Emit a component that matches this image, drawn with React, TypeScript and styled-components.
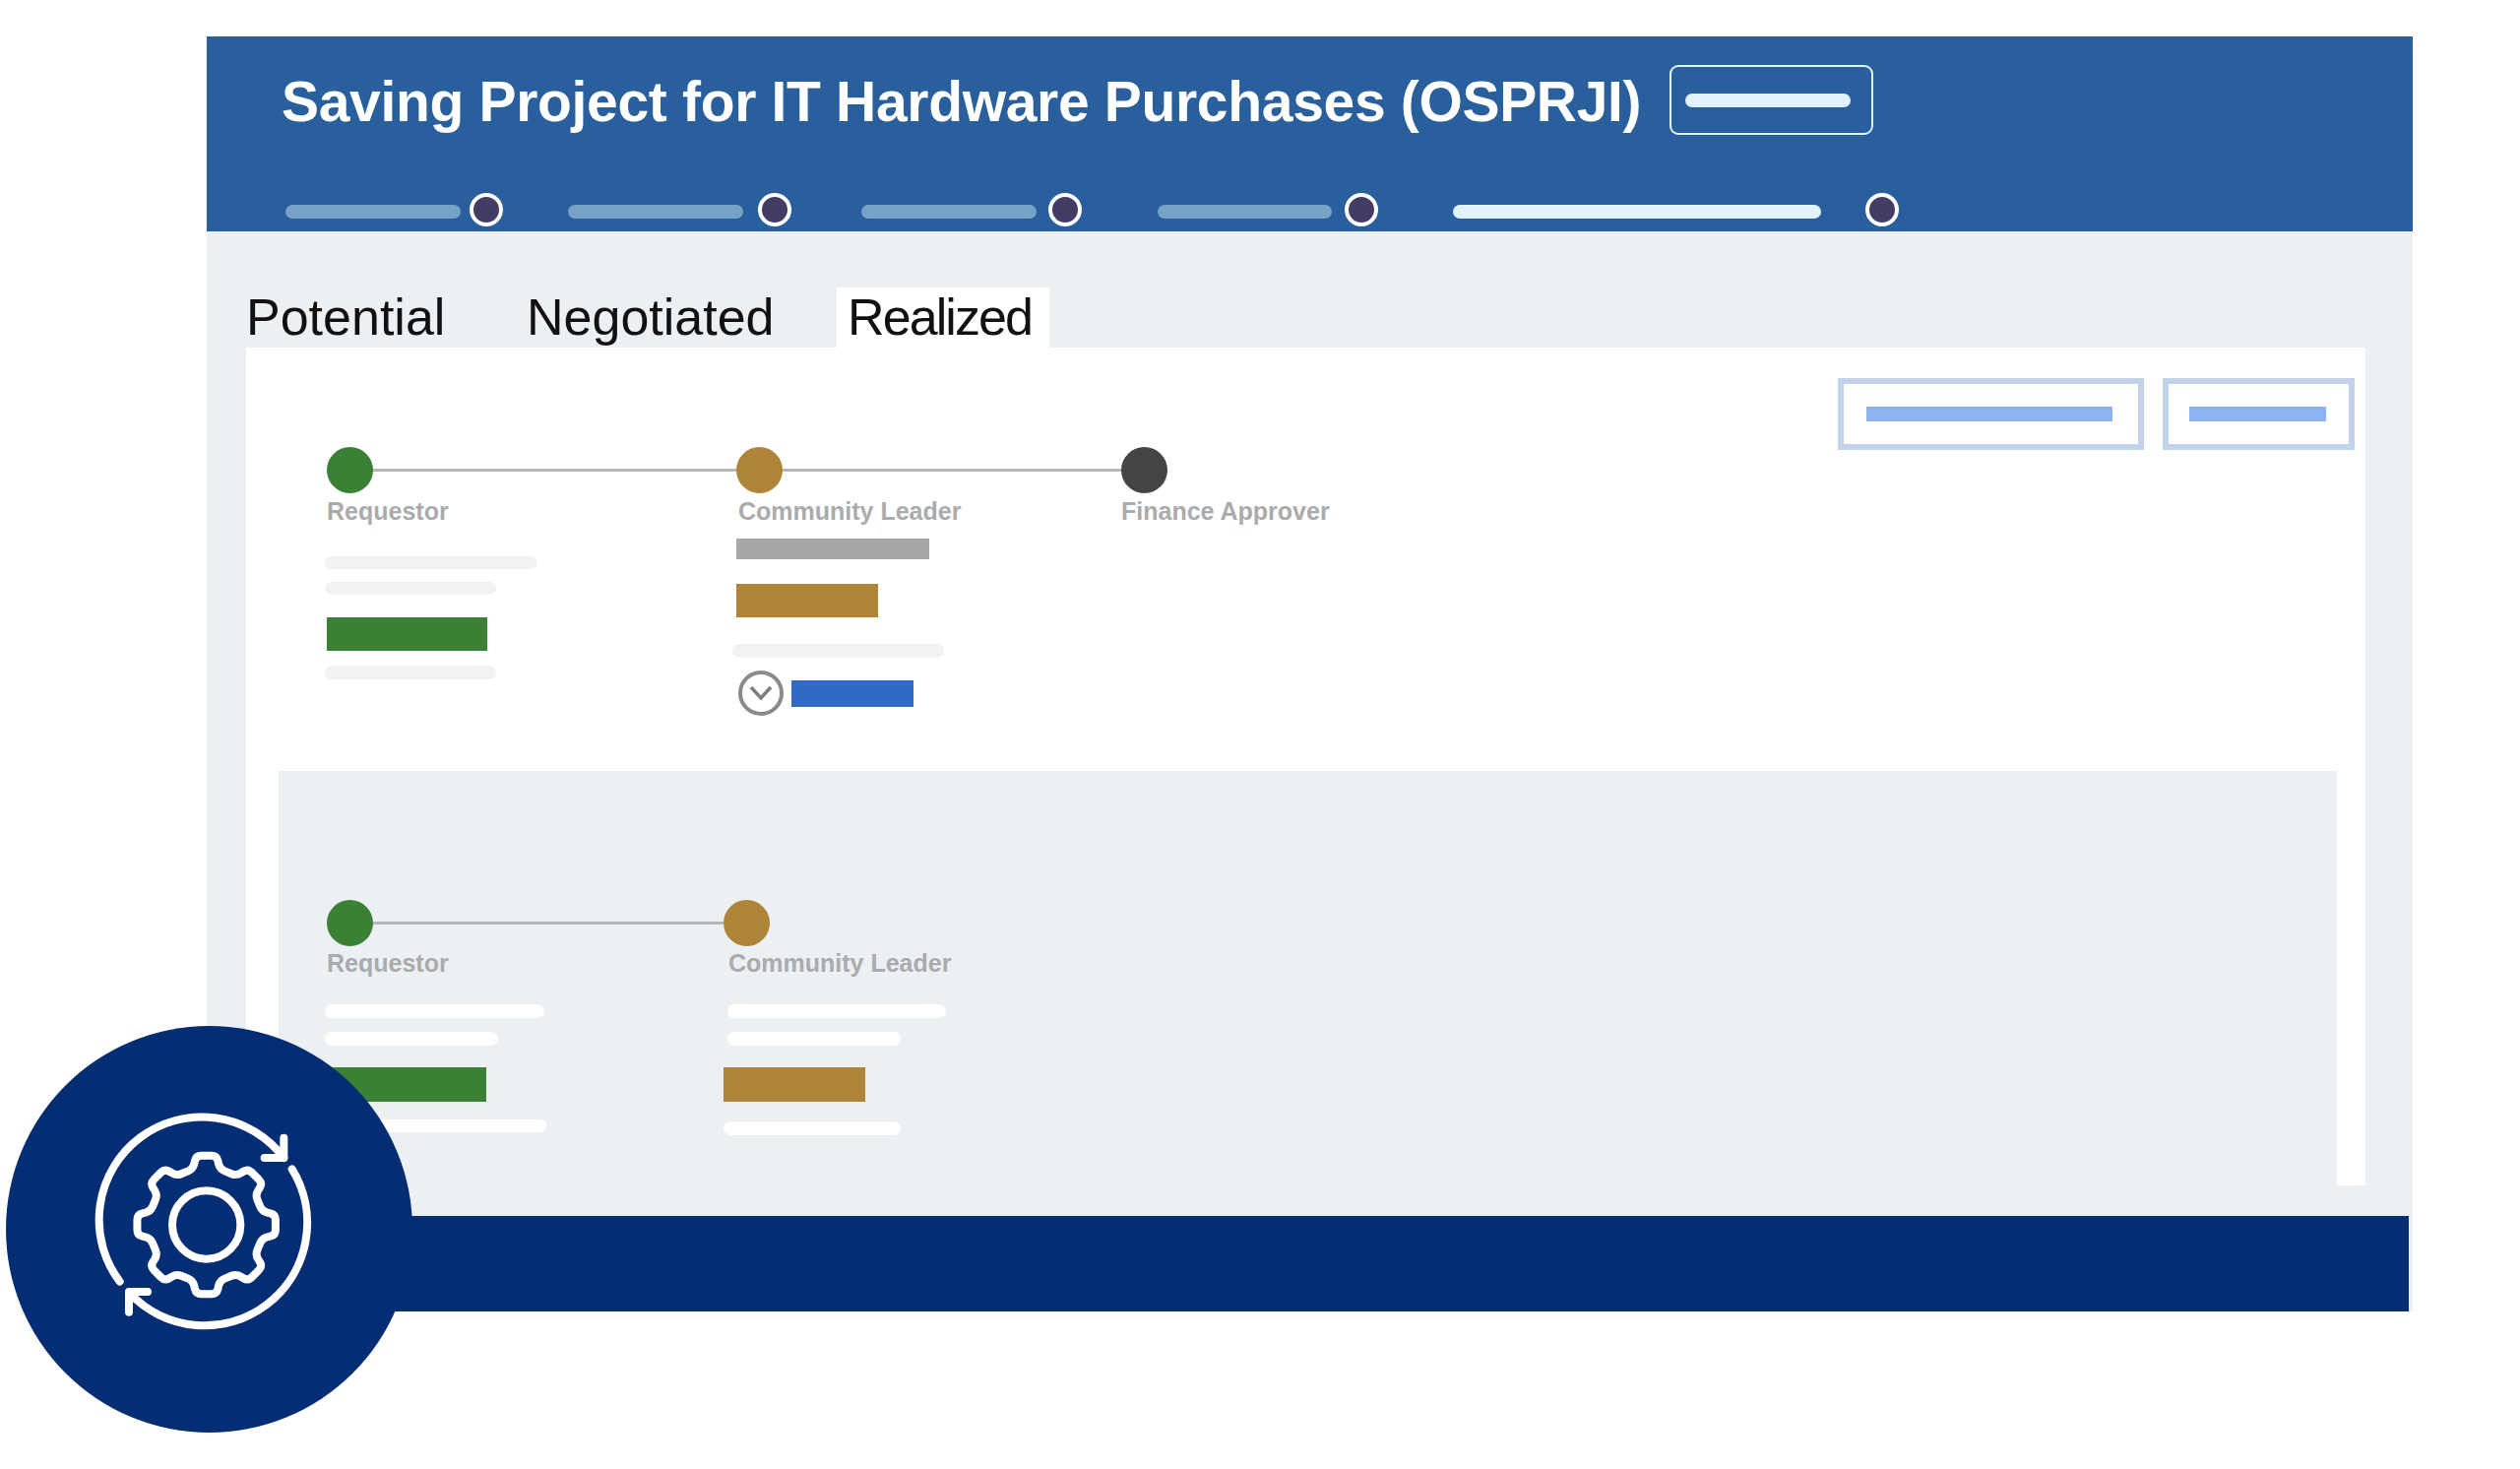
import React from "react";
import styled, { createGlobalStyle } from "styled-components";

const GlobalStyle = createGlobalStyle`
  html, body { margin: 0; padding: 0; background: #fff; }
  * { box-sizing: border-box; }
  body { font-family: "Liberation Sans", Arial, sans-serif; }
`;

const Page = styled.div`
  position: relative;
  width: 2560px;
  height: 1492px;
  padding: 37px 0 0 210px;
  background: #fff;
  overflow: hidden;
`;

const Frame = styled.div`
  width: 2241px;
  background: #ecf0f3;
`;

const Header = styled.header`
  height: 198px;
  padding: 29px 0 0 76px;
  background: #2a5f9e;
`;

const TitleRow = styled.div`
  display: flex;
  align-items: center;
  height: 71px;
`;

const Title = styled.h1`
  margin: 2px 0 0;
  font-size: 57px;
  line-height: 66px;
  font-weight: 700;
  color: #fff;
  white-space: nowrap;
  letter-spacing: -0.32px;
`;

const StatusBox = styled.div`
  display: flex;
  align-items: center;
  justify-content: center;
  width: 207px;
  height: 71px;
  margin-left: 29px;
  padding-right: 7px;
  border: 2px solid #e4f2fb;
  border-radius: 9px;
`;

const StatusBar = styled.div`
  width: 168px;
  height: 14px;
  border-radius: 7px;
  background: #e1f3ff;
`;

const Stepper = styled.div`
  display: flex;
  align-items: center;
  margin: 59px 0 0 4px;
`;

const Step = styled.div<{ $after: number }>`
  display: flex;
  align-items: center;
  margin-right: ${(p) => p.$after}px;
`;

const StepBar = styled.div<{ $w: number; $active?: boolean }>`
  width: ${(p) => p.$w}px;
  height: 14px;
  margin-top: 3px;
  border-radius: 7px;
  background: ${(p) => (p.$active ? "#e1f3ff" : "#76a2c6")};
`;

const StepDot = styled.div<{ $gap: number }>`
  width: 34px;
  height: 34px;
  margin-left: ${(p) => p.$gap}px;
  border: 4px solid #fff;
  border-radius: 50%;
  background: #453c66;
`;

const Body = styled.div`
  padding: 0 48px 31px 40px;
`;

const Tabs = styled.div`
  display: flex;
  align-items: flex-end;
  height: 118px;
`;

const Tab = styled.div<{ $left: number; $w: number; $pad: number; $active?: boolean; $track?: number }>`
  width: ${(p) => p.$w}px;
  height: 61px;
  margin-left: ${(p) => p.$left}px;
  padding-left: ${(p) => p.$pad}px;
  font-size: 52px;
  line-height: 61px;
  color: #111;
  letter-spacing: ${(p) => p.$track ?? 0}px;
  white-space: nowrap;
  background: ${(p) => (p.$active ? "#fff" : "transparent")};
`;

const Card = styled.section`
  display: flex;
  flex-direction: column;
  width: 2153px;
  height: 851px;
  background: #fff;
`;

const TopArea = styled.div`
  display: flex;
  justify-content: space-between;
  height: 430px;
  padding: 31px 11px 0 82px;
`;

const Flow = styled.div<{ $top?: number }>`
  display: flex;
  padding-top: ${(p) => p.$top ?? 0}px;
`;

const Stage = styled.div<{ $w: number }>`
  display: flex;
  flex-direction: column;
  width: ${(p) => p.$w}px;
`;

const Track = styled.div`
  display: flex;
  align-items: center;
  height: 47px;
`;

const Dot = styled.div<{ $c: string }>`
  flex: none;
  width: 47px;
  height: 47px;
  border-radius: 50%;
  background: ${(p) => p.$c};
`;

const Line = styled.div`
  flex: 1;
  height: 3px;
  background: #b5b8ba;
`;

const Label = styled.div<{ $top: number; $indent?: number }>`
  margin: ${(p) => p.$top}px 0 0 ${(p) => p.$indent ?? 0}px;
  font-size: 25px;
  line-height: 30px;
  font-weight: 700;
  color: #a9abac;
  white-space: nowrap;
`;

const Skeleton = styled.div<{ $w: number; $h?: number; $top: number; $left?: number; $light?: boolean }>`
  width: ${(p) => p.$w}px;
  height: ${(p) => p.$h ?? 14}px;
  margin: ${(p) => p.$top}px 0 0 ${(p) => p.$left ?? 0}px;
  border-radius: 7px;
  background: ${(p) => (p.$light ? "#fff" : "#f0f2f3")};
`;

const Block = styled.div<{ $w: number; $h: number; $top?: number; $c: string }>`
  flex: none;
  width: ${(p) => p.$w}px;
  height: ${(p) => p.$h}px;
  margin-top: ${(p) => p.$top ?? 0}px;
  background: ${(p) => p.$c};
`;

const ExpandRow = styled.div`
  display: flex;
  align-items: center;
  gap: 8px;
  margin: 13px 0 0 2px;
`;

const ExpandButton = styled.div`
  display: flex;
  align-items: center;
  justify-content: center;
  width: 46px;
  height: 46px;
  border: 4px solid #8a8a8a;
  border-radius: 50%;
`;

const Actions = styled.div`
  display: flex;
  gap: 19px;
`;

const OutlineButton = styled.div<{ $w: number }>`
  display: flex;
  align-items: center;
  justify-content: center;
  width: ${(p) => p.$w}px;
  height: 73px;
  padding-right: 3px;
  border: 6px solid #c2d2e8;
`;

const ButtonBar = styled.div<{ $w: number }>`
  width: ${(p) => p.$w}px;
  height: 15px;
  background: #8db2f4;
`;

const SubPanel = styled.div`
  flex: 1;
  margin: 0 29px 0 33px;
  padding: 131px 0 0 49px;
  background: #ecf0f3;
`;

const FooterWrap = styled.div`
  padding-right: 4px;
`;

const Footer = styled.footer`
  height: 97px;
  background: #042d73;
`;

const Badge = styled.div`
  position: absolute;
  left: 6px;
  top: 1042px;
  display: flex;
  align-items: center;
  justify-content: center;
  width: 413px;
  height: 413px;
  padding: 23px 5px 0 0;
  border-radius: 50%;
  background: #042d73;
`;

const GREEN = "#3a8035";
const GOLD = "#ae8438";
const DARK = "#444444";

const steps = [
  { bar: 178, gap: 9, after: 66 },
  { bar: 178, gap: 15, after: 71 },
  { bar: 178, gap: 12, after: 77 },
  { bar: 177, gap: 13, after: 76 },
  { bar: 374, gap: 45, after: 0, active: true },
];

function gearPath(): string {
  const cx = 449;
  const cy = 402;
  const pts: [number, number][] = [];
  for (let k = 0; k < 8; k++) {
    const c = k * 45;
    const spec: [number, number][] = [
      [c - 13.5, 175],
      [c - 8.5, 213],
      [c + 8.5, 213],
      [c + 13.5, 175],
    ];
    for (const [deg, r] of spec) {
      const a = (deg * Math.PI) / 180;
      pts.push([cx + r * Math.sin(a), cy - r * Math.cos(a)]);
    }
  }
  const n = pts.length;
  const inset = 16;
  let d = "";
  pts.forEach((p, i) => {
    const prev = pts[(i - 1 + n) % n];
    const next = pts[(i + 1) % n];
    const toward = (q: [number, number]) => {
      const dx = q[0] - p[0];
      const dy = q[1] - p[1];
      const len = Math.hypot(dx, dy);
      const t = Math.min(inset, len / 2.2) / len;
      return [p[0] + dx * t, p[1] + dy * t];
    };
    const a = toward(prev);
    const b = toward(next);
    d += `${i === 0 ? "M" : "L"}${a[0].toFixed(1)} ${a[1].toFixed(1)}Q${p[0].toFixed(1)} ${p[1].toFixed(1)} ${b[0].toFixed(1)} ${b[1].toFixed(1)}`;
  });
  return d + "Z";
}

const GearCycle = () => (
  <svg width="300" height="300" viewBox="0 0 900 900" fill="none" stroke="#fff" strokeWidth="24" strokeLinecap="round" strokeLinejoin="round">
    <path d={gearPath()} />
    <circle cx="449" cy="402" r="104" />
    <path d="M185 575A313 313 0 0 1 685 198" />
    <path d="M685 137V198H626" />
    <path d="M710 232A313 313 0 0 1 215 610" />
    <path d="M213 668V606H270" />
  </svg>
);

const Chevron = () => (
  <svg width="24" height="16" viewBox="0 0 24 16" fill="none" stroke="#7d7d7d" strokeWidth="3.5">
    <path d="M2 2L12 13L22 2" />
  </svg>
);

export default function App() {
  return (
    <>
      <GlobalStyle />
      <Page>
        <Frame>
          <Header>
            <TitleRow>
              <Title>Saving Project for IT Hardware Purchases (OSPRJI)</Title>
              <StatusBox>
                <StatusBar />
              </StatusBox>
            </TitleRow>
            <Stepper>
              {steps.map((s, i) => (
                <Step key={i} $after={s.after}>
                  <StepBar $w={s.bar} $active={s.active} />
                  <StepDot $gap={s.gap} />
                </Step>
              ))}
            </Stepper>
          </Header>
          <Body>
            <Tabs>
              <Tab $left={0} $w={200} $pad={0}>Potential</Tab>
              <Tab $left={85} $w={250} $pad={0}>Negotiated</Tab>
              <Tab $left={65} $w={216} $pad={11} $active $track={-1.9}>Realized</Tab>
            </Tabs>
            <Card>
              <TopArea>
                <Flow $top={70}>
                  <Stage $w={416}>
                    <Track>
                      <Dot $c={GREEN} />
                      <Line />
                    </Track>
                    <Label $top={3}>Requestor</Label>
                    <Skeleton $w={216} $h={13} $top={31} $left={-2} />
                    <Skeleton $w={174} $h={13} $top={13} $left={-2} />
                    <Block $w={163} $h={34} $top={23} $c={GREEN} />
                    <Skeleton $w={174} $top={15} $left={-2} />
                  </Stage>
                  <Stage $w={391}>
                    <Track>
                      <Dot $c={GOLD} />
                      <Line />
                    </Track>
                    <Label $top={3} $indent={2}>Community Leader</Label>
                    <Block $w={196} $h={21} $top={13} $c="#a6a6a6" />
                    <Block $w={144} $h={34} $top={25} $c={GOLD} />
                    <Skeleton $w={215} $top={27} $left={-4} />
                    <ExpandRow>
                      <ExpandButton>
                        <Chevron />
                      </ExpandButton>
                      <Block $w={124} $h={27} $c="#3369c6" />
                    </ExpandRow>
                  </Stage>
                  <Stage $w={220}>
                    <Track>
                      <Dot $c={DARK} />
                    </Track>
                    <Label $top={3}>Finance Approver</Label>
                  </Stage>
                </Flow>
                <Actions>
                  <OutlineButton $w={311}>
                    <ButtonBar $w={250} />
                  </OutlineButton>
                  <OutlineButton $w={195}>
                    <ButtonBar $w={139} />
                  </OutlineButton>
                </Actions>
              </TopArea>
              <SubPanel>
                <Flow>
                  <Stage $w={403}>
                    <Track>
                      <Dot $c={GREEN} />
                      <Line />
                    </Track>
                    <Label $top={2}>Requestor</Label>
                    <Skeleton $w={223} $top={27} $left={-2} $light />
                    <Skeleton $w={176} $top={14} $left={-2} $light />
                    <Block $w={162} $h={35} $top={22} $c={GREEN} />
                    <Skeleton $w={225} $h={13} $top={18} $left={-2} $light />
                  </Stage>
                  <Stage $w={240}>
                    <Track>
                      <Dot $c={GOLD} />
                    </Track>
                    <Label $top={2} $indent={5}>Community Leader</Label>
                    <Skeleton $w={222} $top={27} $left={4} $light />
                    <Skeleton $w={176} $top={14} $left={4} $light />
                    <Block $w={144} $h={35} $top={22} $c={GOLD} />
                    <Skeleton $w={180} $top={20} $light />
                  </Stage>
                </Flow>
              </SubPanel>
            </Card>
          </Body>
          <FooterWrap>
            <Footer />
          </FooterWrap>
        </Frame>
        <Badge>
          <GearCycle />
        </Badge>
      </Page>
    </>
  );
}
